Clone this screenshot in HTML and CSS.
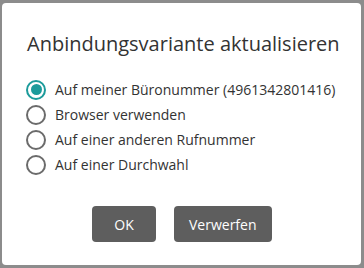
FILE: index.html
```html
<!DOCTYPE html>
<html lang="de">
<head>
    <meta charset="UTF-8">
    <meta name="viewport" content="width=device-width, initial-scale=1.0">
    <title>Anbindungsvariante aktualisieren</title>
    <link rel="stylesheet" href="styles.css">
</head>
<body>
    <div class="dialog">
        <h1 class="dialog-title">Anbindungsvariante aktualisieren</h1>
        <div class="options">
            <label class="option">
                <input type="radio" name="variant" checked>
                <span class="radio"></span>
                <span>Auf meiner Büronummer (4961342801416)</span>
            </label>
            <label class="option">
                <input type="radio" name="variant">
                <span class="radio"></span>
                <span>Browser verwenden</span>
            </label>
            <label class="option">
                <input type="radio" name="variant">
                <span class="radio"></span>
                <span>Auf einer anderen Rufnummer</span>
            </label>
            <label class="option">
                <input type="radio" name="variant">
                <span class="radio"></span>
                <span>Auf einer Durchwahl</span>
            </label>
        </div>
        <div class="actions">
            <button class="btn btn-ok">OK</button>
            <button class="btn">Verwerfen</button>
        </div>
    </div>
</body>
</html>
```

FILE: styles.css
```css
body {
    margin: 0;
    padding: 3px 3px 3px 2px;
    background-color: #8c8c8c;
    font-family: "Open Sans", Arial, sans-serif;
    color: #333;
}
.dialog {
    width: 359px;
    height: 262px;
    box-sizing: border-box;
    background-color: #fff;
    border-radius: 4px;
    padding: 27px 0 0 24px;
}
.dialog-title {
    margin: 0 0 19px 1px;
    font-size: 20px;
    font-weight: normal;
    line-height: 28px;
    color: #333;
}
.options {
    display: flex;
    flex-direction: column;
}
.option {
    display: flex;
    align-items: center;
    gap: 9px;
    height: 25px;
    font-size: 14px;
    cursor: pointer;
}
.option input {
    display: none;
}
.radio {
    width: 20px;
    height: 20px;
    box-sizing: border-box;
    border: 2px solid #6b6b6b;
    border-radius: 50%;
    display: flex;
    align-items: center;
    justify-content: center;
}
.option input:checked + .radio {
    border-color: #1c9b9b;
}
.option input:checked + .radio::after {
    content: "";
    width: 11px;
    height: 11px;
    border-radius: 50%;
    background-color: #1c9b9b;
}
.actions {
    display: flex;
    gap: 18px;
    padding: 29px 0 0 66px;
}
.btn {
    height: 36px;
    padding: 0 15px;
    border: none;
    border-radius: 4px;
    background-color: #5e5e5e;
    color: #fff;
    font-family: "Open Sans", Arial, sans-serif;
    font-size: 14px;
    cursor: pointer;
}
.btn-ok {
    width: 64px;
}
```
